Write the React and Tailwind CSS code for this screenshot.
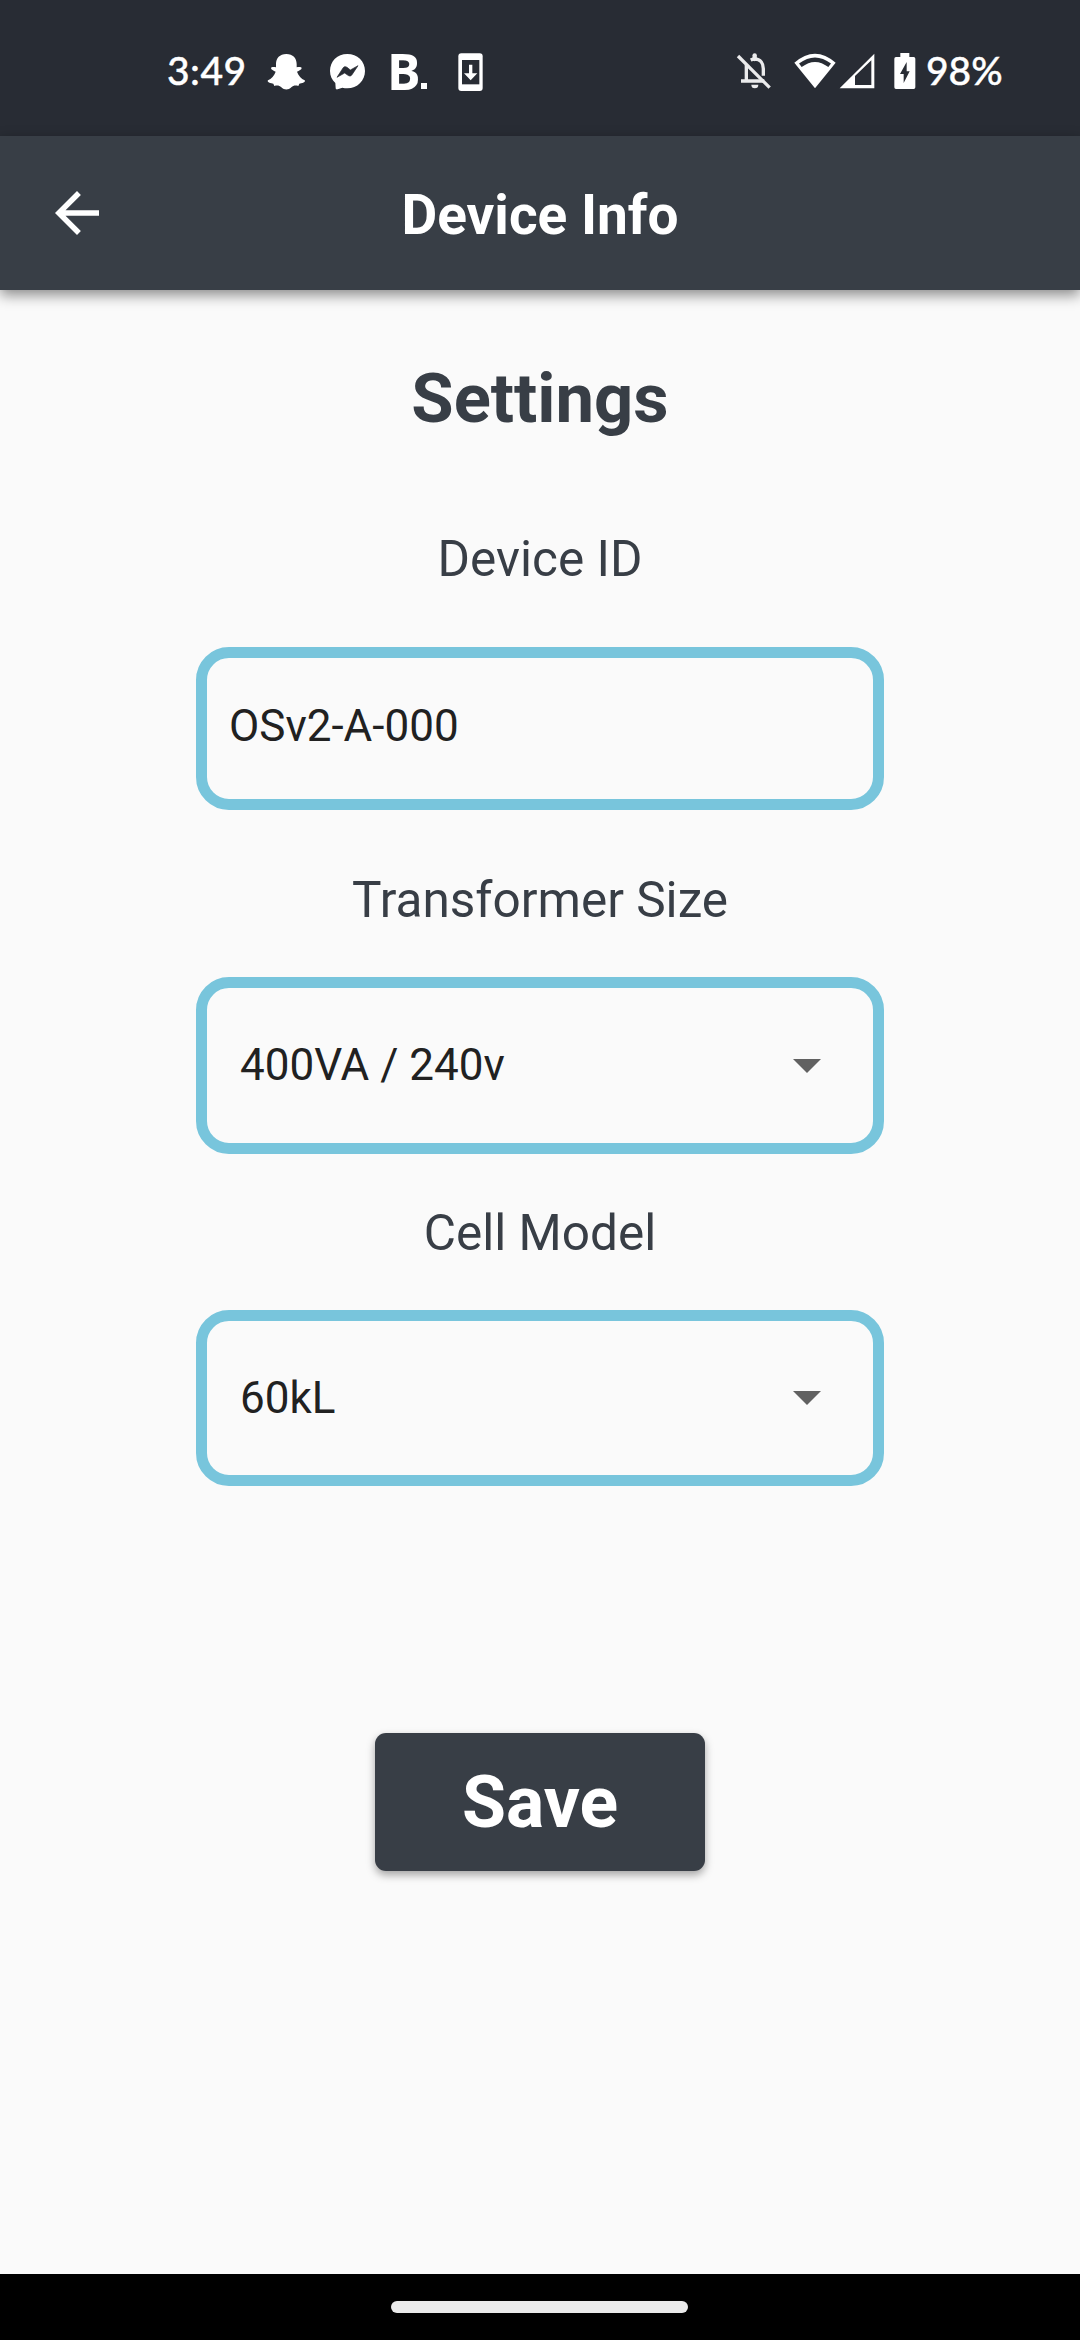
function Snapchat() {
  return (
    <svg className="ml-[23px] h-[38px] w-[39px]" viewBox="351 69 117 114" fill="#fff">
      <path d="M409 72C389 72 378 85 378 102V112C372 110 364 110 363 114C363 119 371 122 377 125C373 137 364 147 354 151C351 154 354 159 370 161L373 168C381 166 388 166 394 172C403 181 415 181 424 172C430 166 437 166 445 168L448 161C464 159 467 154 464 151C454 147 445 137 441 125C447 122 455 119 455 114C454 110 446 110 440 112V102C440 85 429 72 409 72Z" />
    </svg>
  );
}

function Messenger() {
  return (
    <svg className="ml-[23px] h-[38px] w-[37px]" viewBox="537 69 111 114">
      <path d="M592 72C562 72 540 94 540 123C540 138 546 150 556 159L557 174C557 178 560 179 563 178L577 173C582 174 587 175 592 175C622 175 645 152 645 123C645 94 622 72 592 72Z" fill="#fff" />
      <path d="M561 142L579 114C582 109 587 109 591 112L601 120L624 107L606 134C603 139 598 139 594 136L584 129Z" fill="#282c34" stroke="#282c34" strokeWidth="2" strokeLinejoin="round" />
    </svg>
  );
}

function SystemUpdate() {
  return (
    <svg className="ml-[30px] h-[38px] w-[25px]" viewBox="920 67 75 114">
      <rect x="921" y="68" width="73" height="113" rx="9" fill="#fff" />
      <rect x="932" y="88" width="52" height="73" fill="#282c34" />
      <path d="M953 102H963V128H978L958 149L938 128H953Z" fill="#fff" />
    </svg>
  );
}

function BellOff() {
  return (
    <svg className="h-[36px] w-[36px]" viewBox="48 70 108 108" fill="none" stroke="#ebebec" strokeWidth="10">
      <path d="M92 91Q99 88 104 88C122 88 130 102 130 117V138" />
      <path d="M79 106V154M63 154H133" />
      <path d="M104 77V88" strokeWidth="13" strokeLinecap="round" />
      <path d="M94 165H115A10 10 0 0 1 94 165Z" fill="#ebebec" stroke="none" />
      <path d="M54 79L149 174" />
    </svg>
  );
}

function Wifi() {
  return (
    <svg className="ml-[22px] h-[36px] w-[42px]" viewBox="224 68 126 108">
      <path d="M225 97Q287 43 349 97L287 174Z" fill="#fff" />
      <path d="M243 105Q287 71 331 105" fill="none" stroke="#282c34" strokeWidth="13" />
    </svg>
  );
}

function Signal() {
  return (
    <svg className="ml-[3px] h-[36px] w-[36px]" viewBox="356 68 108 108">
      <path fillRule="evenodd" d="M358 174L462 70V174ZM404 164H453V90L404 137Z" fill="#fff" />
    </svg>
  );
}

function Battery() {
  return (
    <svg className="ml-[19px] h-[36px] w-[22px]" viewBox="521 69 66 108">
      <path d="M540 69H567V81H580Q585 81 585 86V172Q585 177 580 177H527Q522 177 522 172V86Q522 81 527 81H540Z" fill="#fff" />
      <path d="M559 96L539 132H550V159L568 124H559Z" fill="#282c34" />
    </svg>
  );
}

function StatusBar() {
  return (
    <div className="flex h-[136px] items-start justify-between bg-[#282c34] pr-[78px] pl-[167px] text-white">
      <div className="mt-[53px] flex h-[38px] items-center">
        <span className="mb-[4px] w-[77px] font-[Lato] text-[39px] leading-[38px] font-medium tracking-[0.5px] whitespace-nowrap [-webkit-text-stroke:0.4px_#fff]">3:49</span>
        <Snapchat />
        <Messenger />
        <div className="mb-[3px] ml-[21px] flex w-[41px] items-end">
          <span className="w-[34px] font-['Open_Sans'] text-[50px] leading-[36px] font-bold">B</span>
          <span className="size-[6px] bg-white" />
        </div>
        <SystemUpdate />
      </div>
      <div className="mt-[53px] flex h-[36px] items-center">
        <BellOff />
        <Wifi />
        <Signal />
        <Battery />
        <span className="mb-[2px] ml-[10px] w-[76px] font-[Lato] text-[39px] leading-[38px] font-medium whitespace-nowrap [-webkit-text-stroke:0.4px_#fff]">98%</span>
      </div>
    </div>
  );
}

function AppBar() {
  return (
    <header className="z-10 grid h-[154px] grid-cols-[154px_1fr_154px] items-center bg-[#383e46] text-white shadow-[0_5px_13px_rgba(0,0,0,0.45)]">
      <svg className="ml-[44px] size-[66px]" viewBox="0 0 24 24" fill="currentColor">
        <path d="M20 11H7.83l5.59-5.59L12 4l-8 8 8 8 1.41-1.41L7.83 13H20v-2z" />
      </svg>
      <h1 className="pt-[4px] text-center text-[55px] leading-[60px] font-bold">Device Info</h1>
    </header>
  );
}

function Label({ children }) {
  return <div className="text-center text-[49.5px] leading-[58px] text-[#383e46]">{children}</div>;
}

function Select({ value }) {
  return (
    <div className="flex h-[176.5px] w-[688px] items-center justify-between rounded-[33px] border-[11px] border-[#78c5dc] pr-[52px] pl-[33px]">
      <span className="text-[44px] leading-[52px] text-[#212121]">{value}</span>
      <svg className="mt-[1px] h-[14px] w-[28px]" viewBox="0 0 28 14">
        <path d="M0 0H28L14 14Z" fill="#616161" />
      </svg>
    </div>
  );
}

export default function App() {
  return (
    <div className="flex h-[2340px] w-[1080px] flex-col overflow-hidden bg-[#fafafa] font-[Roboto,sans-serif]">
      <StatusBar />
      <AppBar />
      <main className="flex flex-1 flex-col items-center">
        <h2 className="mt-[69px] text-[68.75px] leading-[80px] font-bold text-[#383e46]">Settings</h2>
        <div className="mt-[91px]"><Label>Device ID</Label></div>
        <div className="mt-[59px] flex h-[163px] w-[688px] items-center rounded-[33px] border-[11px] border-[#78c5dc] pb-[6px] pl-[22px]">
          <span className="text-[44px] leading-[52px] text-[#212121]">OSv2-A-000</span>
        </div>
        <div className="mt-[61px]"><Label>Transformer Size</Label></div>
        <div className="mt-[48px]"><Select value="400VA / 240v" /></div>
        <div className="mt-[50px]"><Label>Cell Model</Label></div>
        <div className="mt-[48px]"><Select value="60kL" /></div>
        <button className="mt-[247px] h-[138px] w-[330px] rounded-[11px] bg-[#383e46] pt-[2px] text-[71.5px] leading-[80px] font-bold text-white shadow-[0_4px_8px_rgba(0,0,0,0.35)]">Save</button>
      </main>
      <footer className="flex h-[66px] justify-center bg-black pt-[27px]">
        <div className="mr-[1px] h-[12px] w-[297px] rounded-full bg-[#eaeaea]" />
      </footer>
    </div>
  );
}
